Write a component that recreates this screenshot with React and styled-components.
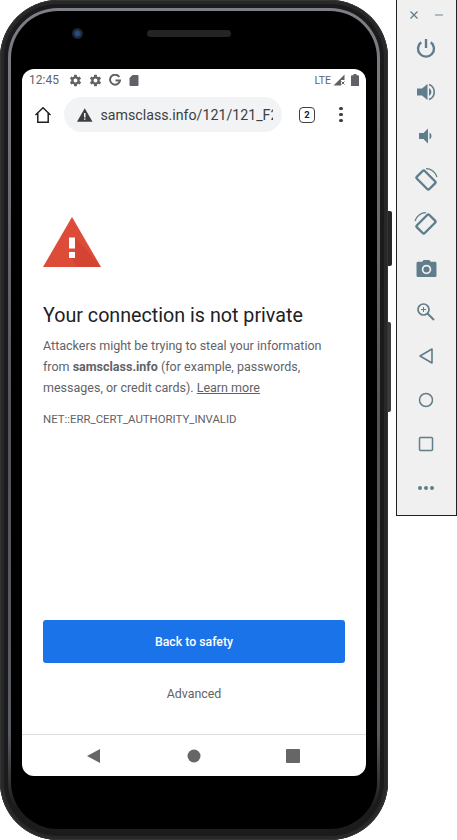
import React from "react";
import styled, { createGlobalStyle } from "styled-components";

const Global = createGlobalStyle`
  html, body { margin: 0; padding: 0; background: #fff; }
  body { font-family: Roboto, "Liberation Sans", sans-serif; overflow: hidden; }
`;

const App = () => (
  <Page>
    <Global />
    <Phone>
      <Rim>
        <Ring>
          <Bezel>
            <TopBezel>
              <Camera />
              <Speaker />
            </TopBezel>
            <Screen>
              <StatusBar>
                <Clock>12:45</Clock>
                <StatusIcons>
                  <GearIcon />
                  <GearIcon />
                  <GoogleIcon />
                  <SdIcon />
                </StatusIcons>
                <StatusRight>
                  <Lte>LTE</Lte>
                  <SignalIcon />
                  <BatteryIcon />
                </StatusRight>
              </StatusBar>
              <Toolbar>
                <HomeIcon />
                <Omnibox>
                  <WarnIcon />
                  <Url>samsclass.info/121/121_F2</Url>
                </Omnibox>
                <TabCount>2</TabCount>
                <MenuDots>
                  <i />
                  <i />
                  <i />
                </MenuDots>
              </Toolbar>
              <Content>
                <BigWarning />
                <Title>Your connection is not private</Title>
                <Body>
                  Attackers might be trying to steal your information from{" "}
                  <strong>samsclass.info</strong> (for example, passwords,
                  messages, or credit cards). <LearnMore>Learn more</LearnMore>
                </Body>
                <ErrCode>NET::ERR_CERT_AUTHORITY_INVALID</ErrCode>
                <SafetyButton>Back to safety</SafetyButton>
                <Advanced>Advanced</Advanced>
              </Content>
              <NavBar>
                <svg width="16" height="16" viewBox="0 0 16 16">
                  <path d="M14 1v14L1 8z" fill="#666" />
                </svg>
                <svg width="16" height="16" viewBox="0 0 16 16">
                  <circle cx="8" cy="8" r="6.5" fill="#666" />
                </svg>
                <svg width="16" height="16" viewBox="0 0 16 16">
                  <rect x="1" y="1" width="14" height="14" rx="1" fill="#666" />
                </svg>
              </NavBar>
            </Screen>
          </Bezel>
        </Ring>
      </Rim>
      <SideKey $top={211} $height={55} />
      <SideKey $top={322} $height={90} $light />
    </Phone>
    <SidePanel>
      <WindowRow>
        <svg width="10" height="10" viewBox="0 0 10 10">
          <path d="M1.500 1.500l7 7M8.500 1.500l-7 7" stroke="#5f7d8c" strokeWidth="1.3" />
        </svg>
        <svg width="10" height="10" viewBox="0 0 10 10">
          <path d="M1 5h8" stroke="#8aa0ab" strokeWidth="1.3" />
        </svg>
      </WindowRow>
      <Tool>
        <svg width="22" height="22" viewBox="0 0 22 22" fill="none" stroke="#607d8b" strokeWidth="2.4">
          <path d="M11 2v9" />
          <path d="M6.200 5.200a8 8 0 1 0 9.600 0" />
        </svg>
      </Tool>
      <Tool>
        <svg width="22" height="22" viewBox="0 0 22 22">
          <path d="M2 7.500h5L12.500 3v16L7 14.500H2z" fill="#607d8b" />
          <path d="M14 7a4.500 4.500 0 0 1 0 8z" fill="#607d8b" />
          <path d="M14 3.500a8 8 0 0 1 0 15" fill="none" stroke="#607d8b" strokeWidth="1.6" />
        </svg>
      </Tool>
      <Tool>
        <svg width="22" height="22" viewBox="0 0 22 22">
          <path d="M4 8h4.500L13 3.500v15L8.500 14H4z" fill="#607d8b" />
          <path d="M14.500 7.500a4 4 0 0 1 0 7z" fill="#607d8b" />
        </svg>
      </Tool>
      <Tool>
        <svg width="24" height="24" viewBox="0 0 24 24" fill="none" stroke="#607d8b">
          <rect x="3.250" y="6.500" width="17.500" height="11" rx="1.500" strokeWidth="2.4" transform="rotate(45 12 12)" />
          <path d="M12 0.700A11.500 11.500 0 0 1 23 9" strokeWidth="1.300" />
        </svg>
      </Tool>
      <Tool>
        <svg width="24" height="24" viewBox="0 0 24 24" fill="none" stroke="#607d8b">
          <rect x="3.250" y="6.500" width="17.500" height="11" rx="1.500" strokeWidth="2.4" transform="rotate(-45 12 12)" />
          <path d="M12 0.700A11.500 11.500 0 0 0 1 9" strokeWidth="1.300" />
        </svg>
      </Tool>
      <Tool>
        <svg width="21" height="19" viewBox="0 0 22 20">
          <path
            d="M2 3h4.500L8 1h6l1.500 2H20a1.500 1.500 0 0 1 1.500 1.500v13A1.500 1.500 0 0 1 20 19H2a1.500 1.500 0 0 1-1.500-1.500v-13A1.500 1.500 0 0 1 2 3z"
            fill="#607d8b"
          />
          <circle cx="11" cy="11" r="5" fill="#f0f0f0" />
          <circle cx="11" cy="11" r="3.200" fill="#607d8b" />
        </svg>
      </Tool>
      <Tool>
        <svg width="20" height="20" viewBox="0 0 20 20" fill="none" stroke="#607d8b">
          <circle cx="7.500" cy="7.500" r="5.500" strokeWidth="1.700" />
          <path d="M11.500 11.500l6.500 6.500" strokeWidth="2" />
          <path d="M7.500 5v5M5 7.500h5" strokeWidth="1" />
        </svg>
      </Tool>
      <Tool>
        <svg width="16" height="18" viewBox="0 0 16 18" fill="none">
          <path d="M14 2v14L2 9z" stroke="#607d8b" strokeWidth="1.600" strokeLinejoin="round" />
        </svg>
      </Tool>
      <Tool>
        <svg width="16" height="16" viewBox="0 0 16 16" fill="none">
          <circle cx="8" cy="8" r="6.500" stroke="#607d8b" strokeWidth="1.500" />
        </svg>
      </Tool>
      <Tool>
        <svg width="16" height="16" viewBox="0 0 16 16" fill="none">
          <rect x="1.500" y="1.500" width="13" height="13" rx="1" stroke="#607d8b" strokeWidth="1.500" />
        </svg>
      </Tool>
      <Tool>
        <svg width="18" height="6" viewBox="0 0 18 6">
          <circle cx="3" cy="3" r="2" fill="#607d8b" />
          <circle cx="9" cy="3" r="2" fill="#607d8b" />
          <circle cx="15" cy="3" r="2" fill="#607d8b" />
        </svg>
      </Tool>
    </SidePanel>
  </Page>
);

export default App;

const GearIcon = () => (
  <svg width="13" height="13" viewBox="3 2 20 20">
    <path
      d="M19.400 13a7.500 7.500 0 0 0 0-2l2.100-1.600-2-3.500-2.500 1a7.500 7.500 0 0 0-1.700-1L15 3.200h-4l-.4 2.700a7.500 7.500 0 0 0-1.700 1l-2.500-1-2 3.500L6.500 11a7.500 7.500 0 0 0 0 2l-2.100 1.600 2 3.500 2.500-1a7.500 7.500 0 0 0 1.700 1l.4 2.700h4l.4-2.700a7.500 7.500 0 0 0 1.700-1l2.500 1 2-3.500zM13 15a3 3 0 1 1 0-6 3 3 0 0 1 0 6z"
      fill="#5f6368"
    />
  </svg>
);

const GoogleIcon = () => (
  <svg width="12" height="12" viewBox="0 0 12 12" fill="none">
    <path d="M10.300 3A5 5 0 1 0 11 6.500H6.500" stroke="#5f6368" strokeWidth="2" />
  </svg>
);

const SdIcon = () => (
  <svg width="10" height="12" viewBox="0 0 10 12">
    <path d="M3.500 1H8.500a1 1 0 0 1 1 1v9a1 1 0 0 1-1 1h-7a1 1 0 0 1-1-1V4z" fill="#5f6368" />
  </svg>
);

const SignalIcon = () => (
  <svg width="12" height="12" viewBox="0 0 12 12">
    <path d="M11.500 0.500v5.500H8v5.500H0.500z" fill="#5f6368" />
    <path d="M8.500 7.500l3 3M11.500 7.500l-3 3" stroke="#5f6368" strokeWidth="1" />
  </svg>
);

const BatteryIcon = () => (
  <svg width="8" height="12" viewBox="0 0 8 12">
    <path d="M2.500 0h3v1.200H7a1 1 0 0 1 1 1V12H0V2.200a1 1 0 0 1 1-1h1.500z" fill="#5f6368" />
  </svg>
);

const HomeIcon = () => (
  <HomeWrap>
    <svg width="18" height="18" viewBox="0 0 18 18" fill="none">
      <path d="M1.500 9L9 1.800 16.500 9M3.800 7.200V16.200h10.400V7.200" stroke="#202124" strokeWidth="1.500" />
    </svg>
  </HomeWrap>
);

const WarnIcon = () => (
  <svg width="16" height="14" viewBox="0 0 16 14">
    <path d="M8 0l8 14H0z" fill="#3c4043" />
    <path d="M7.200 5h1.600v4.500H7.200zM7.200 10.500h1.600V12H7.200z" fill="#f1f3f4" />
  </svg>
);

const BigWarning = () => (
  <TriangleWrap>
    <svg width="58" height="50" viewBox="0 0 58 50">
      <path d="M29 0l29 50H0z" fill="#dd4b39" />
      <path d="M32 20l26 30H34l-6-10 4-3z" fill="#c53929" opacity=".4" />
      <rect x="26" y="20.500" width="6" height="11" fill="#fff" />
      <rect x="26" y="35" width="6" height="6" fill="#fff" />
    </svg>
  </TriangleWrap>
);

const Page = styled.div`
  width: 457px;
  height: 840px;
  display: flex;
  align-items: flex-start;
  overflow: hidden;
  background: #fff;
`;

const Phone = styled.div`
  position: relative;
  flex: none;
  width: 388px;
  height: 840px;
  margin-right: 8px;
`;

const SideKey = styled.span`
  position: absolute;
  right: -${(p) => (p.$light ? 3 : 4)}px;
  top: ${(p) => p.$top}px;
  width: ${(p) => (p.$light ? 3 : 4)}px;
  height: ${(p) => p.$height}px;
  background: ${(p) => (p.$light ? "#3a3a3a" : "#262626")};
  border-radius: 0 2px 2px 0;
`;

const Rim = styled.div`
  box-sizing: border-box;
  height: 100%;
  padding: 8px;
  border-radius: 58px;
  background: #1b1b1b;
  box-shadow: inset 0 0 0 1px #353535, inset 0 0 0 4px #282828;
`;

const Ring = styled.div`
  box-sizing: border-box;
  height: 100%;
  padding: 3px;
  border-radius: 50px;
  background: linear-gradient(180deg, #7d8086 0%, #525459 50%, #5a5d63 88%, #1c1c1c 97%);
`;

const Bezel = styled.div`
  box-sizing: border-box;
  height: 100%;
  display: flex;
  flex-direction: column;
  padding: 0 10px 53px 11px;
  border-radius: 47px;
  background: #000;
`;

const TopBezel = styled.div`
  height: 58px;
  flex: none;
  display: flex;
  align-items: center;
  padding: 0 0 14px 50px;
  gap: 64px;
  box-sizing: border-box;
`;

const Camera = styled.span`
  width: 11px;
  height: 11px;
  border-radius: 50%;
  background: radial-gradient(circle, #2a4a80 0 25%, #1b2230 55%, #15181e 100%);
`;

const Speaker = styled.span`
  width: 84px;
  height: 7px;
  border-radius: 4px;
  background: #242424;
`;

const Screen = styled.div`
  flex: 1;
  display: flex;
  flex-direction: column;
  width: 344px;
  background: #fff;
  border-radius: 12px;
  overflow: hidden;
`;

const StatusBar = styled.div`
  height: 24px;
  flex: none;
  display: flex;
  align-items: center;
  padding: 0 7px 2px;
  box-sizing: border-box;
  color: #5f6368;
`;

const Clock = styled.span`
  font-size: 12px;
  margin-right: 10px;
`;

const StatusIcons = styled.div`
  display: flex;
  align-items: center;
  gap: 7px;

  svg:last-child {
    margin-left: 1px;
  }
`;

const StatusRight = styled.div`
  margin-left: auto;
  display: flex;
  align-items: center;
  gap: 2px;

  svg:last-child {
    margin-left: 4px;
  }
`;

const Lte = styled.span`
  font-size: 10.500px;
`;

const Toolbar = styled.div`
  height: 46px;
  flex: none;
  display: flex;
  align-items: center;
  padding-bottom: 3px;
  box-sizing: border-box;
`;

const HomeWrap = styled.div`
  width: 42px;
  display: flex;
  justify-content: center;
`;

const Omnibox = styled.div`
  box-sizing: border-box;
  width: 218px;
  height: 35px;
  display: flex;
  align-items: center;
  gap: 8px;
  padding: 0 9px 0 13px;
  border-radius: 18px;
  background: #f1f3f4;
  overflow: hidden;
`;

const Url = styled.span`
  font-size: 14.200px;
  color: #3c4043;
  white-space: nowrap;
  overflow: hidden;
`;

const TabCount = styled.span`
  box-sizing: border-box;
  width: 16px;
  height: 16px;
  margin-left: 17px;
  display: flex;
  align-items: center;
  justify-content: center;
  border: 1.500px solid #3c4043;
  border-radius: 4px;
  font-size: 9.500px;
  font-weight: 700;
  color: #202124;
`;

const MenuDots = styled.div`
  margin-left: 24px;
  display: flex;
  flex-direction: column;
  gap: 2.500px;

  i {
    width: 3.500px;
    height: 3.500px;
    border-radius: 50%;
    background: #3c4043;
  }
`;

const Content = styled.div`
  flex: 1;
  display: flex;
  flex-direction: column;
  padding: 0 21px;
  min-height: 0;
`;

const TriangleWrap = styled.div`
  margin-top: 78px;
  height: 50px;
`;

const Title = styled.h1`
  margin: 37px 0 0;
  font-size: 19.700px;
  font-weight: 400;
  line-height: 24px;
  color: #202124;
`;

const Body = styled.p`
  margin: 7px 0 0;
  font-size: 12.500px;
  line-height: 21px;
  color: #5f6368;

  strong {
    font-weight: 700;
  }
`;

const LearnMore = styled.span`
  text-decoration: underline;
`;

const ErrCode = styled.div`
  margin-top: 14px;
  font-size: 11.400px;
  line-height: 14px;
  color: #5f6368;
`;

const SafetyButton = styled.div`
  margin-top: auto;
  height: 43px;
  flex: none;
  display: flex;
  align-items: center;
  justify-content: center;
  background: #1a73e8;
  border-radius: 3px;
  color: #fff;
  font-size: 12.300px;
  font-weight: 500;
`;

const Advanced = styled.div`
  height: 71px;
  flex: none;
  padding-top: 23px;
  box-sizing: border-box;
  text-align: center;
  font-size: 12.400px;
  line-height: 16px;
  font-weight: 400;
  color: #5f6368;
`;

const NavBar = styled.div`
  height: 42px;
  flex: none;
  display: flex;
  align-items: center;
  justify-content: space-between;
  padding: 0 65px 0 64px;
  border-top: 1px solid #dadce0;
  box-sizing: border-box;
`;

const SidePanel = styled.div`
  box-sizing: border-box;
  flex: none;
  width: 61px;
  height: 516px;
  background: #f0f0f0;
  border: 1px solid #222;
  border-top: none;
  display: flex;
  flex-direction: column;
`;

const WindowRow = styled.div`
  height: 26px;
  flex: none;
  display: flex;
  align-items: center;
  justify-content: space-between;
  padding: 4px 12px 0 12px;
  box-sizing: border-box;
`;

const Tool = styled.div`
  height: 44px;
  flex: none;
  display: flex;
  align-items: center;
  justify-content: center;
  padding-right: 1px;
`;
